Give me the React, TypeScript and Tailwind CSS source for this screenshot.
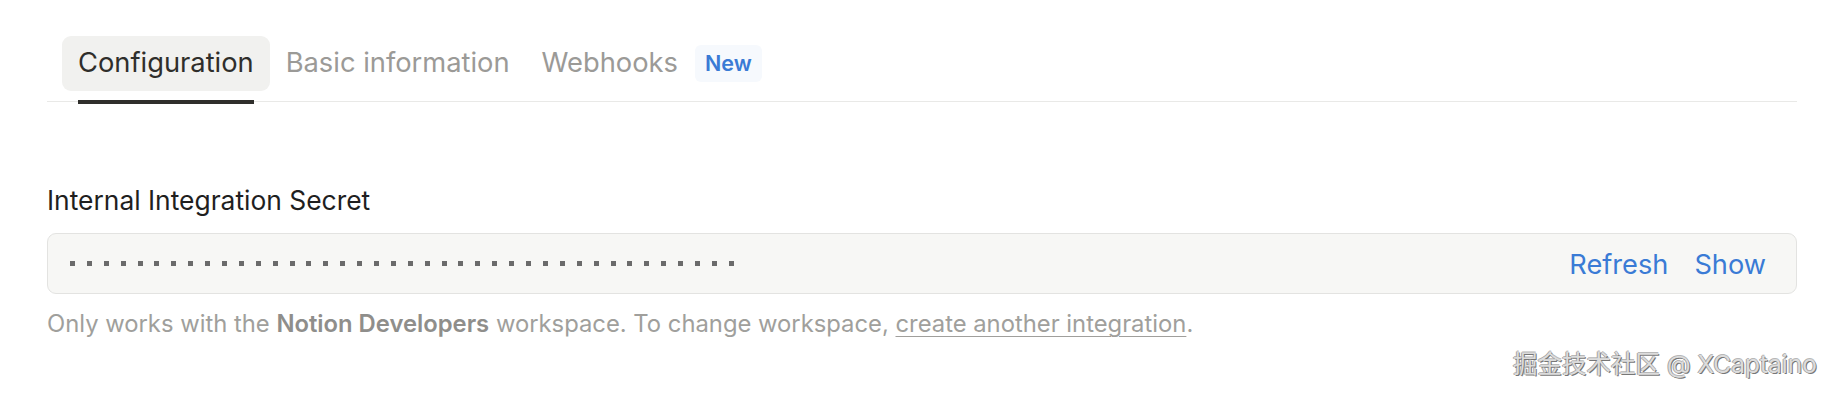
import React from "react";

const tabs = [
    { label: "Configuration", active: true },
    { label: "Basic information", active: false },
    { label: "Webhooks", active: false, badge: "New" },
];

const App: React.FC = () => {
    const dots = Array.from({ length: 40 });

    return (
        <div className="relative w-[1836px] h-[394px] overflow-hidden bg-white font-['Inter','Noto_Sans_CJK_SC',sans-serif] text-[#37352f]">
            <div className="pl-[47px] pr-[39px] pt-[36px]">
                {/* Tabs */}
                <div className="flex pl-[15px] border-b border-[#e9e9e7]">
                    {tabs.map((t) => (
                        <div key={t.label} className="flex flex-col">
                            <div className={`h-[55px] px-4 flex items-center rounded-[9px] text-[27.3px] ${t.active ? "bg-[#f1f1ef] text-[#2f2e2b]" : "text-[#9b9a97]"}`}>
                                {t.label}
                                {t.badge && (
                                    <span className="ml-[17px] h-[37px] px-[10px] flex items-center rounded-[6px] bg-[#f6f9fd] text-[21.5px] font-semibold text-[#3a7bd5]">
                                        {t.badge}
                                    </span>
                                )}
                            </div>
                            <div className={`mt-[9px] mx-4 h-[4px] -mb-[3px] ${t.active ? "bg-[#2f2e2b]" : "bg-transparent"}`} />
                        </div>
                    ))}
                </div>

                {/* Secret */}
                <div className="mt-[81px] text-[26.4px] leading-[34px] text-[#1f1f1f]">Internal Integration Secret</div>
                <div className="mt-4 h-[61px] flex items-center justify-between rounded-[9px] border border-[#e3e3e1] bg-[#f7f7f5] pl-[22px] pr-[30px]">
                    <div className="flex items-center gap-[11.9px]">
                        {dots.map((_, i) => (
                            <span key={i} className="block w-[5px] h-[5px] bg-[#6b6b6b]" />
                        ))}
                    </div>
                    <div className="flex items-center gap-[26px] text-[27.2px] leading-[34px] pt-[2px] text-[#3a7bd5]">
                        <span>Refresh</span>
                        <span>Show</span>
                    </div>
                </div>
                <div className="mt-[15px] text-[23.8px] leading-[30px] text-[#a09f9c]">
                    Only works with the <span className="font-semibold text-[#8f8e8b]">Notion Developers</span> workspace. To change workspace, <span className="underline decoration-1 underline-offset-[4px]">create another integration</span>.
                </div>
            </div>

            {/* Watermark */}
            <div className="absolute left-[1513px] top-[349px] text-[24.5px] leading-[30px] text-[#dcdcdc] [text-shadow:1px_1px_0_#777777,-1px_0_0_#a5a5a5,0_-1px_0_#b8b8b8] whitespace-nowrap">
                掘金技术社区 @ XCaptaino
            </div>
        </div>
    );
};

export default App;
